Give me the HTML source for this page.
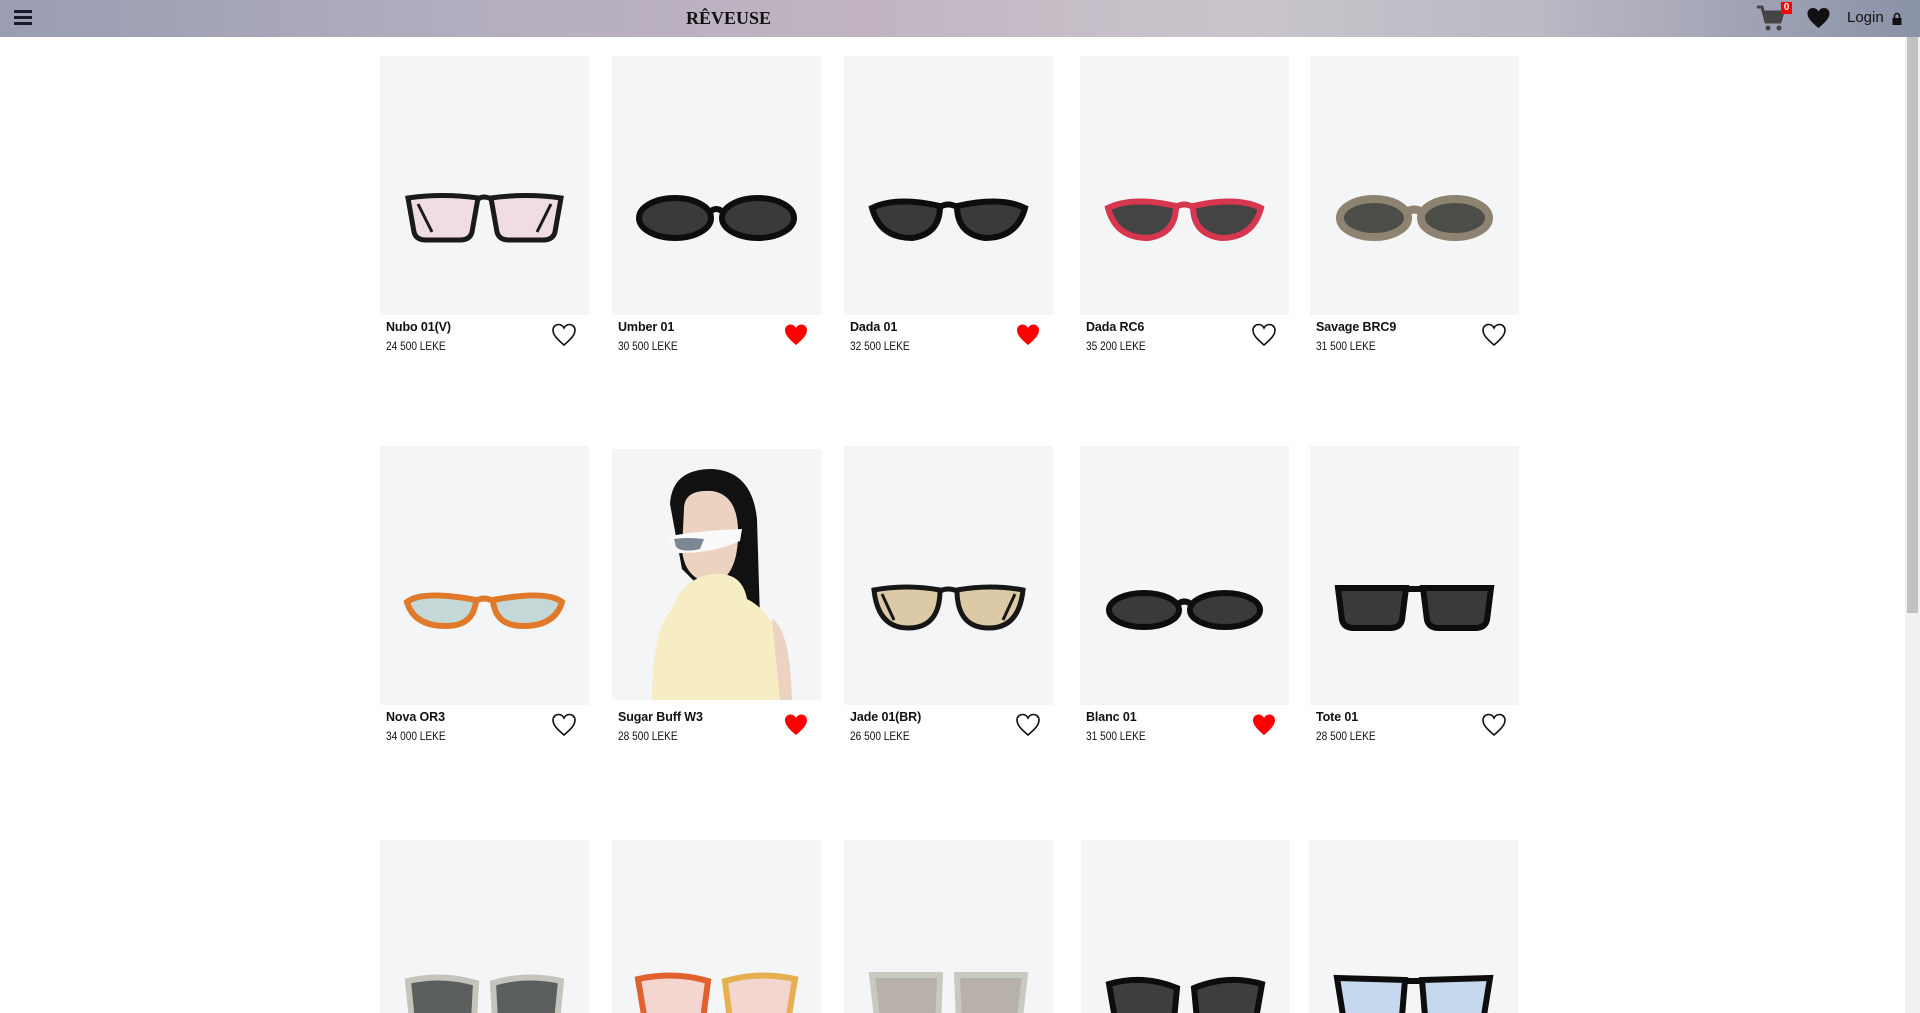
<!DOCTYPE html>
<html style="width:1920px;height:1013px;overflow:hidden"><head><meta charset="utf-8"><style>
*{margin:0;padding:0;box-sizing:border-box}
body{width:1920px;height:1013px;overflow:hidden;background:#fff;font-family:"Liberation Sans",sans-serif;position:relative}
.hdr{position:absolute;left:0;top:0;width:1920px;height:37px;background:linear-gradient(90deg,#9a9db3 0%,#b3aebf 25%,#c2b4c2 45%,#c9c5cb 65%,#bcb8c4 80%,#8a92a8 100%)}
.logo{position:absolute;left:686px;top:8px;font-family:"Liberation Serif",serif;font-weight:bold;font-size:18px;color:#111}
.sb{position:absolute;left:1905px;top:37px;width:15px;height:976px;background:#f1f1f1}
.sb i{position:absolute;left:2px;top:0;width:11px;height:576px;background:#c1c1c1}
.card{position:absolute;width:209px}
.img{width:209px;height:259px;background:#f4f5f7;position:relative}
.img svg{position:absolute;left:22px;top:134px}
.nm{position:absolute;left:6px;top:264px;font-size:12.5px;color:#111;font-weight:bold;letter-spacing:-.1px}
.pr{position:absolute;left:6px;top:285px;font-size:11.5px;color:#111;transform:scaleX(.88);transform-origin:left}
.ht{position:absolute;left:171px;top:267px}
</style></head><body>
<div class="hdr">
 <div style="position:absolute;left:14px;top:10px;width:18px">
  <div style="height:3px;background:#1a1a2a;margin-bottom:3px"></div><div style="height:3px;background:#1a1a2a;margin-bottom:3px"></div><div style="height:3px;background:#1a1a2a"></div>
 </div>
 <div class="logo">RÊVEUSE</div>
 <svg style="position:absolute;left:1756px;top:4px" width="30" height="28" viewBox="0 0 30 28"><path d="M1 3h5l4 15h14l3-10H8" fill="none" stroke="#444" stroke-width="3"/><path d="M9 9h17l-3 8H11z" fill="#444"/><circle cx="12" cy="24" r="2.5" fill="#444"/><circle cx="23" cy="24" r="2.5" fill="#444"/></svg>
 <div style="position:absolute;left:1781px;top:2px;width:11px;height:12px;background:#f00;color:#fff;font-size:10px;font-weight:bold;text-align:center;line-height:12px">0</div>
 <svg style="position:absolute;left:1806px;top:7px" width="25" height="22" viewBox="0 0 24 22"><path d="M12 21C5 15 1 11 1 6.5 1 3 3.5 1 6.5 1 9 1 11 2.5 12 4.5 13 2.5 15 1 17.5 1 20.5 1 23 3 23 6.5 23 11 19 15 12 21z" fill="#111"/></svg>
 <div style="position:absolute;left:1847px;top:9px;font-size:15px;color:#111">Login</div>
 <svg style="position:absolute;left:1892px;top:12px" width="10" height="13" viewBox="0 0 10 13"><path d="M2.5 6V4a2.5 2.5 0 0 1 5 0v2" fill="none" stroke="#111" stroke-width="1.6"/><rect x="0.5" y="6" width="9" height="7" fill="#111"/></svg>
</div>
<div class="sb"><i></i></div>

<!-- ROW 1 -->
<div class="card" style="left:380px;top:56px"><div class="img">
<svg width="165" height="56" viewBox="0 0 165 56"><path d="M6 8 Q40 3 76 8 L70 42 Q68 50 58 50 L24 50 Q14 50 12 42Z" fill="#f0dde4" stroke="#1a1a1a" stroke-width="5"/><path d="M159 8 Q125 3 89 8 L95 42 Q97 50 107 50 L141 50 Q151 50 153 42Z" fill="#f0dde4" stroke="#1a1a1a" stroke-width="5"/><path d="M76 9 Q82 5 89 9" fill="none" stroke="#1a1a1a" stroke-width="5"/><path d="M16 14 L30 42 M149 14 L135 42" stroke="#1a1a1a" stroke-width="3"/></svg></div>
<div class="nm">Nubo 01(V)</div><div class="pr">24 500 LEKE</div>
<svg class="ht" width="26" height="24" viewBox="0 0 26 24"><path d="M13 22C6 16 2 12 2 7 2 4 4.5 1.5 7.5 1.5 10 1.5 12 3 13 5 14 3 16 1.5 18.5 1.5 21.5 1.5 24 4 24 7 24 12 20 16 13 22z" fill="none" stroke="#111" stroke-width="1.6"/></svg></div>

<div class="card" style="left:612px;top:56px"><div class="img">
<svg width="165" height="56" viewBox="0 0 165 56"><ellipse cx="41" cy="28" rx="36" ry="20" fill="#3a3a3a" stroke="#0d0d0d" stroke-width="6"/><ellipse cx="124" cy="28" rx="36" ry="20" fill="#3a3a3a" stroke="#0d0d0d" stroke-width="6"/><path d="M76 22 Q82 16 89 22" fill="none" stroke="#0d0d0d" stroke-width="6"/></svg></div>
<div class="nm">Umber 01</div><div class="pr">30 500 LEKE</div>
<svg class="ht" width="26" height="24" viewBox="0 0 26 24"><path d="M13 22C6 16 2 12 2 7 2 4 4.5 1.5 7.5 1.5 10 1.5 12 3 13 5 14 3 16 1.5 18.5 1.5 21.5 1.5 24 4 24 7 24 12 20 16 13 22z" fill="#f00"/></svg></div>

<div class="card" style="left:844px;top:56px"><div class="img">
<svg width="165" height="56" viewBox="0 0 165 56"><path d="M6 18 Q30 6 74 16 Q74 44 46 48 Q14 48 6 18Z" fill="#3a3a3a" stroke="#0d0d0d" stroke-width="6"/><path d="M159 18 Q135 6 91 16 Q91 44 119 48 Q151 48 159 18Z" fill="#3a3a3a" stroke="#0d0d0d" stroke-width="6"/><path d="M74 17 Q82 12 91 17" fill="none" stroke="#0d0d0d" stroke-width="6"/></svg></div>
<div class="nm">Dada 01</div><div class="pr">32 500 LEKE</div>
<svg class="ht" width="26" height="24" viewBox="0 0 26 24"><path d="M13 22C6 16 2 12 2 7 2 4 4.5 1.5 7.5 1.5 10 1.5 12 3 13 5 14 3 16 1.5 18.5 1.5 21.5 1.5 24 4 24 7 24 12 20 16 13 22z" fill="#f00"/></svg></div>

<div class="card" style="left:1080px;top:56px"><div class="img">
<svg width="165" height="56" viewBox="0 0 165 56"><path d="M6 18 Q30 6 74 16 Q74 44 46 48 Q14 48 6 18Z" fill="#444" stroke="#d6364e" stroke-width="6"/><path d="M159 18 Q135 6 91 16 Q91 44 119 48 Q151 48 159 18Z" fill="#444" stroke="#d6364e" stroke-width="6"/><path d="M74 17 Q82 12 91 17" fill="none" stroke="#d6364e" stroke-width="6"/></svg></div>
<div class="nm">Dada RC6</div><div class="pr">35 200 LEKE</div>
<svg class="ht" width="26" height="24" viewBox="0 0 26 24"><path d="M13 22C6 16 2 12 2 7 2 4 4.5 1.5 7.5 1.5 10 1.5 12 3 13 5 14 3 16 1.5 18.5 1.5 21.5 1.5 24 4 24 7 24 12 20 16 13 22z" fill="none" stroke="#111" stroke-width="1.6"/></svg></div>

<div class="card" style="left:1310px;top:56px"><div class="img">
<svg width="165" height="56" viewBox="0 0 165 56"><ellipse cx="42" cy="28" rx="34" ry="19" fill="#4c4c48" stroke="#8e8270" stroke-width="8"/><ellipse cx="123" cy="28" rx="34" ry="19" fill="#4c4c48" stroke="#8e8270" stroke-width="8"/><path d="M75 22 Q82 17 90 22" fill="none" stroke="#8e8270" stroke-width="8"/></svg></div>
<div class="nm">Savage BRC9</div><div class="pr">31 500 LEKE</div>
<svg class="ht" width="26" height="24" viewBox="0 0 26 24"><path d="M13 22C6 16 2 12 2 7 2 4 4.5 1.5 7.5 1.5 10 1.5 12 3 13 5 14 3 16 1.5 18.5 1.5 21.5 1.5 24 4 24 7 24 12 20 16 13 22z" fill="none" stroke="#111" stroke-width="1.6"/></svg></div>

<!-- ROW 2 -->
<div class="card" style="left:380px;top:446px"><div class="img">
<svg width="165" height="56" viewBox="0 0 165 56"><path d="M5 22 Q20 10 74 20 Q72 46 44 46 Q12 46 5 22Z" fill="#c4d8d8" stroke="#e07a2a" stroke-width="6"/><path d="M160 22 Q145 10 91 20 Q93 46 121 46 Q153 46 160 22Z" fill="#c4d8d8" stroke="#e07a2a" stroke-width="6"/><path d="M74 21 Q82 16 91 21" fill="none" stroke="#e07a2a" stroke-width="6"/></svg></div>
<div class="nm">Nova OR3</div><div class="pr">34 000 LEKE</div>
<svg class="ht" width="26" height="24" viewBox="0 0 26 24"><path d="M13 22C6 16 2 12 2 7 2 4 4.5 1.5 7.5 1.5 10 1.5 12 3 13 5 14 3 16 1.5 18.5 1.5 21.5 1.5 24 4 24 7 24 12 20 16 13 22z" fill="none" stroke="#111" stroke-width="1.6"/></svg></div>

<div class="card" style="left:612px;top:446px"><div class="img" style="margin-top:3px;height:251px;overflow:hidden">
<svg style="left:0;top:0" width="209" height="251" viewBox="0 0 209 251"><path d="M58 55 Q60 20 100 20 Q140 22 145 70 L148 170 L120 170 L70 120Z" fill="#111"/><path d="M72 60 Q72 40 100 42 Q128 46 126 90 Q124 130 100 135 Q72 130 70 100Z" fill="#ecd2c0"/><path d="M60 160 Q70 130 100 125 Q130 122 135 150 Q175 170 180 251 L40 251 Q40 180 60 160Z" fill="#f7edc4"/><path d="M160 170 Q178 180 180 251 L168 251Z" fill="#ecd2c0"/><path d="M55 88 Q80 82 130 80 L128 92 Q100 105 62 104Z" fill="#fafafa"/><path d="M62 90 Q75 88 92 90 L88 100 Q70 104 64 98Z" fill="#7e8794"/></svg></div>
<div class="nm" style="top:264px">Sugar Buff W3</div><div class="pr">28 500 LEKE</div>
<svg class="ht" width="26" height="24" viewBox="0 0 26 24"><path d="M13 22C6 16 2 12 2 7 2 4 4.5 1.5 7.5 1.5 10 1.5 12 3 13 5 14 3 16 1.5 18.5 1.5 21.5 1.5 24 4 24 7 24 12 20 16 13 22z" fill="#f00"/></svg></div>

<div class="card" style="left:844px;top:446px"><div class="img">
<svg width="165" height="56" viewBox="0 0 165 56"><path d="M8 10 Q40 4 74 10 Q74 48 42 48 Q12 48 8 10Z" fill="#dcc9a6" stroke="#161616" stroke-width="5"/><path d="M157 10 Q125 4 91 10 Q91 48 123 48 Q153 48 157 10Z" fill="#dcc9a6" stroke="#161616" stroke-width="5"/><path d="M74 11 Q82 7 91 11" fill="none" stroke="#161616" stroke-width="5"/><path d="M16 14 L28 40 M149 14 L137 40" stroke="#161616" stroke-width="3"/></svg></div>
<div class="nm">Jade 01(BR)</div><div class="pr">26 500 LEKE</div>
<svg class="ht" width="26" height="24" viewBox="0 0 26 24"><path d="M13 22C6 16 2 12 2 7 2 4 4.5 1.5 7.5 1.5 10 1.5 12 3 13 5 14 3 16 1.5 18.5 1.5 21.5 1.5 24 4 24 7 24 12 20 16 13 22z" fill="none" stroke="#111" stroke-width="1.6"/></svg></div>

<div class="card" style="left:1080px;top:446px"><div class="img">
<svg width="165" height="56" viewBox="0 0 165 56"><ellipse cx="42" cy="30" rx="35" ry="17" fill="#3a3a3a" stroke="#0d0d0d" stroke-width="6"/><ellipse cx="123" cy="30" rx="35" ry="17" fill="#3a3a3a" stroke="#0d0d0d" stroke-width="6"/><path d="M76 24 Q82 19 89 24" fill="none" stroke="#0d0d0d" stroke-width="6"/></svg></div>
<div class="nm">Blanc 01</div><div class="pr">31 500 LEKE</div>
<svg class="ht" width="26" height="24" viewBox="0 0 26 24"><path d="M13 22C6 16 2 12 2 7 2 4 4.5 1.5 7.5 1.5 10 1.5 12 3 13 5 14 3 16 1.5 18.5 1.5 21.5 1.5 24 4 24 7 24 12 20 16 13 22z" fill="#f00"/></svg></div>

<div class="card" style="left:1310px;top:446px"><div class="img">
<svg width="165" height="56" viewBox="0 0 165 56"><path d="M6 8 L74 8 L70 40 Q68 48 58 48 L22 48 Q12 48 10 40Z" fill="#3a3a3a" stroke="#0d0d0d" stroke-width="6"/><path d="M159 8 L91 8 L95 40 Q97 48 107 48 L143 48 Q153 48 155 40Z" fill="#3a3a3a" stroke="#0d0d0d" stroke-width="6"/><path d="M74 9 L91 9" stroke="#0d0d0d" stroke-width="6"/></svg></div>
<div class="nm">Tote 01</div><div class="pr">28 500 LEKE</div>
<svg class="ht" width="26" height="24" viewBox="0 0 26 24"><path d="M13 22C6 16 2 12 2 7 2 4 4.5 1.5 7.5 1.5 10 1.5 12 3 13 5 14 3 16 1.5 18.5 1.5 21.5 1.5 24 4 24 7 24 12 20 16 13 22z" fill="none" stroke="#111" stroke-width="1.6"/></svg></div>

<!-- ROW 3 -->
<div class="card" style="left:380px;top:840px"><div class="img" style="height:173px;overflow:hidden">
<svg style="top:131px" width="165" height="56" viewBox="0 0 165 56"><path d="M6 10 Q40 2 74 12 L72 50 L10 50Z" fill="#5a5e5c" stroke="#c4c4bc" stroke-width="6"/><path d="M159 10 Q125 2 91 12 L93 50 L155 50Z" fill="#5a5e5c" stroke="#c4c4bc" stroke-width="6"/></svg></div></div>
<div class="card" style="left:612px;top:840px"><div class="img" style="height:173px;overflow:hidden">
<svg style="top:131px" width="165" height="56" viewBox="0 0 165 56"><path d="M4 8 Q40 0 74 10 L68 56 L12 56Z" fill="#f2d6cf" stroke="#e0602e" stroke-width="6"/><path d="M161 8 Q125 0 91 10 L97 56 L153 56Z" fill="#f2d6cf" stroke="#e6b050" stroke-width="6"/></svg></div></div>
<div class="card" style="left:844px;top:840px"><div class="img" style="height:173px;overflow:hidden">
<svg style="top:129px" width="165" height="56" viewBox="0 0 165 56"><path d="M6 6 L74 6 L72 56 L12 56Z" fill="#b8b0aa" stroke="#c8cac2" stroke-width="6"/><path d="M159 6 L91 6 L93 56 L153 56Z" fill="#b8b0aa" stroke="#c8cac2" stroke-width="6"/></svg></div></div>
<div class="card" style="left:1081px;top:840px"><div class="img" style="height:173px;overflow:hidden">
<svg style="top:134px" width="165" height="56" viewBox="0 0 165 56"><path d="M6 10 Q40 0 74 14 L70 56 L14 56Z" fill="#3e3e3e" stroke="#0d0d0d" stroke-width="6"/><path d="M159 10 Q125 0 91 14 L95 56 L151 56Z" fill="#3e3e3e" stroke="#0d0d0d" stroke-width="6"/></svg></div></div>
<div class="card" style="left:1309px;top:840px"><div class="img" style="height:173px;overflow:hidden">
<svg style="top:132px" width="165" height="56" viewBox="0 0 165 56"><path d="M6 6 L74 8 L70 56 L14 56Z" fill="#c6d8ee" stroke="#0d0d0d" stroke-width="6"/><path d="M159 6 L91 8 L95 56 L151 56Z" fill="#c6d8ee" stroke="#0d0d0d" stroke-width="6"/><path d="M74 9 L91 9" stroke="#0d0d0d" stroke-width="6"/></svg></div></div>
</body></html>
